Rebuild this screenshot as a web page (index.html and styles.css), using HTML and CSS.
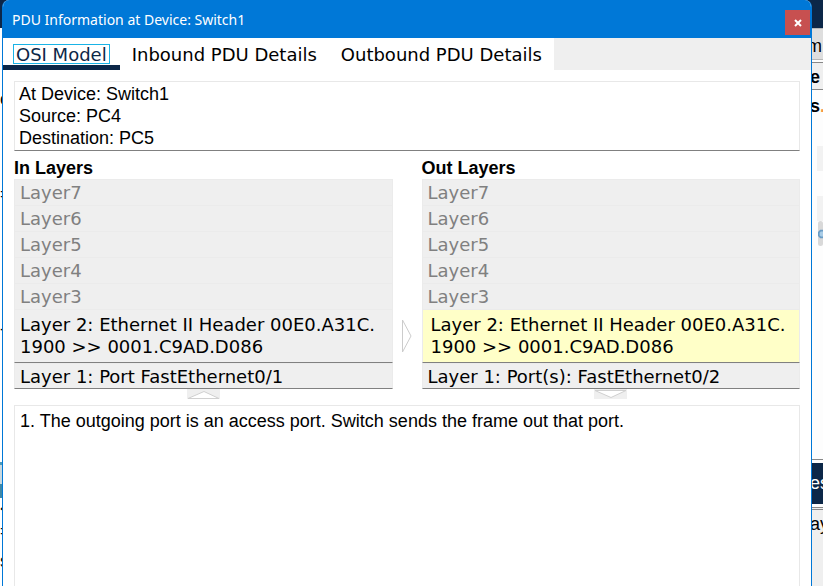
FILE: index.html
```html
<!DOCTYPE html>
<html lang="en">
<head>
<meta charset="utf-8">
<title>PDU Information</title>
<link rel="stylesheet" href="styles.css">
</head>
<body>
<div class="desktop">
  <div class="edge edge-left" aria-hidden="true">
    <div class="edge-title"></div>
    <span class="sliver sliver-c">c</span>
    <span class="sliver sliver-f">=</span>
    <span class="sliver sliver-dot">-</span>
    <div class="teal"></div>
    <span class="sliver sliver-x">&lt;</span>
    <span class="sliver">=</span>
    <span class="sliver">s</span>
  </div>
  <main class="window">
    <header class="titlebar">
      <h1>PDU Information at Device: Switch1</h1>
      <button class="close" type="button" aria-label="Close">
        <svg width="8" height="8" viewBox="0 0 8 8"><path d="M1 1 7 7M7 1 1 7" stroke="#fff" stroke-width="2"/></svg>
      </button>
    </header>
    <nav class="tabs">
      <button class="tab active" type="button"><span>OSI Model</span></button>
      <button class="tab" type="button">Inbound PDU Details</button>
      <button class="tab" type="button">Outbound PDU Details</button>
    </nav>
    <div class="content">
      <section class="summary">
        <p>At Device: Switch1</p>
        <p>Source: PC4</p>
        <p>Destination: PC5</p>
      </section>
      <div class="layers">
        <section class="column">
          <h2>In Layers</h2>
          <button class="layer" type="button" disabled>Layer7</button>
          <button class="layer" type="button" disabled>Layer6</button>
          <button class="layer" type="button" disabled>Layer5</button>
          <button class="layer" type="button" disabled>Layer4</button>
          <button class="layer" type="button" disabled>Layer3</button>
          <button class="layer tall" type="button">Layer 2: Ethernet II Header 00E0.A31C.<br>1900 &gt;&gt; 0001.C9AD.D086</button>
          <button class="layer" type="button">Layer 1: Port FastEthernet0/1</button>
          <svg class="arrow" width="33" height="10" viewBox="0 0 33 10"><path d="M0 0H33V10H0Z" fill="#efefef"/><path d="M1 9.5 17 2.5 32 9.5Z" fill="#fff" stroke="#d0d0d0"/></svg>
        </section>
        <svg class="next" width="10" height="34" viewBox="0 0 10 34"><path d="M.5 1V33L9 17Z" fill="#fff" stroke="#ccc"/></svg>
        <section class="column">
          <h2>Out Layers</h2>
          <button class="layer" type="button" disabled>Layer7</button>
          <button class="layer" type="button" disabled>Layer6</button>
          <button class="layer" type="button" disabled>Layer5</button>
          <button class="layer" type="button" disabled>Layer4</button>
          <button class="layer" type="button" disabled>Layer3</button>
          <button class="layer tall selected" type="button">Layer 2: Ethernet II Header 00E0.A31C.<br>1900 &gt;&gt; 0001.C9AD.D086</button>
          <button class="layer" type="button">Layer 1: Port(s): FastEthernet0/2</button>
          <svg class="arrow" width="33" height="10" viewBox="0 0 33 10"><path d="M0 0H33V10H0Z" fill="#efefef"/><path d="M1 1.5 17 8.5 32 1.5Z" fill="#fff" stroke="#d0d0d0"/></svg>
        </section>
      </div>
      <section class="notes">1. The outgoing port is an access port. Switch sends the frame out that port.</section>
    </div>
  </main>
  <div class="edge edge-right" aria-hidden="true">
    <div class="edge-title"></div>
    <div class="strip strip-m">m</div>
    <div class="strip strip-e">e</div>
    <div class="strip strip-s">s<span class="orange">.</span></div>
    <div class="block"></div>
    <div class="block block-low"></div>
    <div class="tool"><svg width="6" height="12" viewBox="0 0 6 12"><path d="M6 2H3L1 4V8L3 10H6" fill="#a9cce6" stroke="#6a9cc5" stroke-width="2"/></svg></div>
    <div class="blank"></div>
    <div class="strip navy">es</div>
    <div class="rest">ay</div>
  </div>
</div>
</body>
</html>
```
FILE: styles.css
```css
* { box-sizing: border-box; }
html, body { height: 100%; }
body { margin: 0; background: #fff; color: #000; font: 18px/22px "Liberation Sans", Arial, sans-serif; overflow: hidden; }
button { margin: 0; border: 0; font: inherit; color: inherit; }
h1, h2, p { margin: 0; }

.desktop { display: grid; grid-template-columns: 2px minmax(0, 1fr) 11px; min-height: 100vh; background: linear-gradient(#0c2748 28px, #fff 28px); }
.edge { display: flex; flex-direction: column; overflow: hidden; height: 100vh; white-space: nowrap; background: #fff; }
.edge-title { flex: none; height: 28px; background: #0c2748; }

.sliver { flex: none; height: 22px; margin-bottom: 8px; }
.sliver-c { margin-top: 60px; margin-bottom: 73px; }
.sliver-f { margin-bottom: 113px; }
.sliver-dot { margin-bottom: 122px; }
.teal { flex: none; height: 36px; border-top: 3px solid #4d9ab8; border-bottom: 14px solid #3f88a6; background: #c8d8df; }
.sliver-x { margin-bottom: 0; }

.window { display: flex; flex-direction: column; background: #fff; border: 1px solid #0078d7; border-top: 0; border-bottom: 0; border-radius: 7px 7px 0 0; overflow: hidden; }
.titlebar { display: flex; justify-content: space-between; align-items: center; height: 38px; padding: 2px 1px 0 9px; background: #0078d7; color: #fff; }
.titlebar h1 { font: 400 14px/32px "Noto Sans", "Segoe UI", sans-serif; }
.close { display: flex; align-items: center; justify-content: center; width: 25px; height: 25px; padding: 0; margin-top: 5px; background: #c75050; }

.tabs { display: flex; height: 32px; background: #efefef; font-family: "DejaVu Sans", Verdana, sans-serif; }
.tab { height: 32px; padding: 1px 12px 0; background: #fff; line-height: 30px; }
.tab.active { display: flex; padding: 6px 10px 0; border-bottom: 5px solid #0c2748; color: #0c2748; }
.tab.active span { height: 20px; padding: 0 2px; border: 1px solid #19b3e6; line-height: 20px; }

.content { display: flex; flex-direction: column; flex: 1; padding: 11px 11px 0; }
.summary { padding: 1px 4px; border: 1px solid #e8e8e8; border-bottom-color: #808080; }
.layers { display: grid; grid-template-columns: minmax(0, 1fr) 29px minmax(0, 1fr); padding-top: 6px; }
.column { display: flex; flex-direction: column; }
.column h2 { height: 22px; font-size: 18px; line-height: 22px; }
.layer { height: 26px; padding: 0 5px; border: 1px solid #ebebeb; border-width: 1px 1px 0; background: #efefef; font-family: "DejaVu Sans", Verdana, sans-serif; line-height: 24px; text-align: left; white-space: nowrap; }
.layer:disabled { color: #808080; }
.layer:enabled { padding-top: 1px; border-bottom: 1px solid #808080; }
.layer.tall { height: 54px; padding-top: 0; line-height: 22px; }
.layer.selected { padding-left: 8px; background: #ffffc8; }
.arrow { align-self: center; }
.next { align-self: end; justify-self: center; margin-bottom: 46px; }
.notes { flex: 1; margin-top: 6px; padding: 4px 5px; border: 1px solid #e8e8e8; border-bottom: 0; }

.edge-right { background: #fdfdfd; text-indent: -2px; }
.strip { flex: none; }
.strip-m { height: 32px; border: 1px solid #b8b8b8; border-width: 1px 0; background: #dedede; line-height: 34px; text-indent: -5px; }
.strip-e { height: 28px; margin-top: 2px; border: 1px solid #888; border-width: 1px 0; background: #efefef; font-weight: 700; line-height: 28px; }
.strip-s { margin: 5px 0 29px; font-weight: 700; }
.orange { color: #f79646; }
.block { flex: none; height: 25px; margin-left: 5px; background: #f2f2f2; }
.block-low { margin-top: 25px; }
.tool { display: flex; align-items: center; flex: none; height: 25px; margin-left: 6px; border-radius: 3px; background: #d9d9d9; }
.blank { flex: none; height: 214px; border-bottom: 1px solid #888; }
.navy { height: 41px; margin: 3px 0; background: #0c2748; color: #fff; line-height: 41px; }
.rest { flex: 1; padding-top: 3px; border-top: 3px double #888; background: #efefef; }
```
